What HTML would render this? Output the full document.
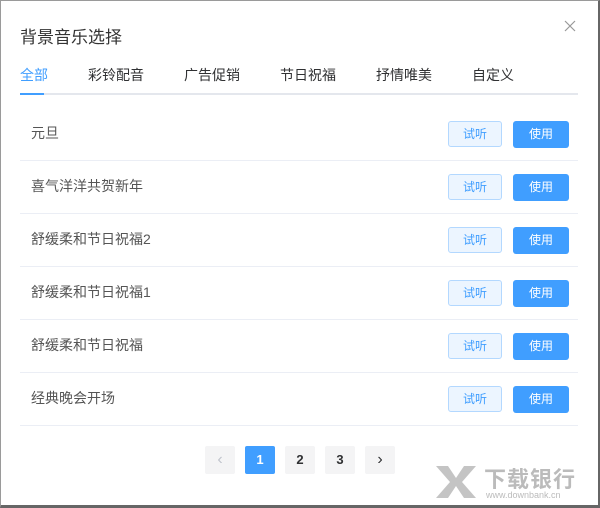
<!DOCTYPE html>
<html><head><meta charset="utf-8"><style>
body{margin:0;width:600px;height:508px;background:#fff;font-family:"Liberation Sans","Noto Sans CJK SC",sans-serif;position:relative;overflow:hidden}
.frame{position:absolute;left:0;top:0;border:1px solid #9a9a9a;border-right:2px solid #666;border-bottom:3px solid #666;box-sizing:border-box;width:600px;height:508px}
.title{position:absolute;left:20px;top:23px;font-size:17px;color:#333}
.close{position:absolute;left:564px;top:20px}
.tabs{position:absolute;left:20px;top:65px;width:558px;height:28px;border-bottom:2px solid #e4e7ed}
.tab{position:absolute;top:0;font-size:14px;color:#303133}
.ul{position:absolute;left:0;bottom:-2px;width:24px;height:2px;background:#409eff}
.row{position:absolute;left:20px;width:558px;height:53px;border-bottom:1px solid #ebeef5}
.name{position:absolute;left:11px;top:16px;font-size:14px;color:#555}
.b1{position:absolute;left:428px;top:14px;width:54px;height:26px;box-sizing:border-box;border:1px solid #b3d8ff;background:#ecf5ff;color:#409eff;font-size:12px;text-align:center;line-height:24px;border-radius:3px}
.b2{position:absolute;left:493px;top:14px;width:56px;height:27px;background:#409eff;color:#fff;font-size:12px;text-align:center;line-height:27px;border-radius:3px}
.pg{position:absolute;top:446px;width:30px;height:28px;background:#f4f4f5;color:#303133;font-size:13px;font-weight:bold;text-align:center;line-height:28px;border-radius:2px}
</style></head><body>
<div class="frame"></div>
<div class="title">背景音乐选择</div>
<svg class="close" width="12" height="12" viewBox="0 0 12 12"><path d="M1 1L11 11M11 1L1 11" stroke="#999" stroke-width="1.2"/></svg>
<div class="tabs">
<span class="tab" style="left:0;color:#409eff">全部</span>
<span class="tab" style="left:68px">彩铃配音</span>
<span class="tab" style="left:164px">广告促销</span>
<span class="tab" style="left:260px">节日祝福</span>
<span class="tab" style="left:356px">抒情唯美</span>
<span class="tab" style="left:452px">自定义</span>
<div class="ul"></div>
</div>
<div class="row" style="top:107px"><span class="name">元旦</span><div class="b1">试听</div><div class="b2">使用</div></div>
<div class="row" style="top:160px"><span class="name">喜气洋洋共贺新年</span><div class="b1">试听</div><div class="b2">使用</div></div>
<div class="row" style="top:213px"><span class="name">舒缓柔和节日祝福2</span><div class="b1">试听</div><div class="b2">使用</div></div>
<div class="row" style="top:266px"><span class="name">舒缓柔和节日祝福1</span><div class="b1">试听</div><div class="b2">使用</div></div>
<div class="row" style="top:319px"><span class="name">舒缓柔和节日祝福</span><div class="b1">试听</div><div class="b2">使用</div></div>
<div class="row" style="top:372px"><span class="name">经典晚会开场</span><div class="b1">试听</div><div class="b2">使用</div></div>
<div class="pg" style="left:205px;color:#c0c4cc;font-weight:normal;font-size:16px">‹</div>
<div class="pg" style="left:245px;background:#409eff;color:#fff">1</div>
<div class="pg" style="left:285px">2</div>
<div class="pg" style="left:325px">3</div>
<div class="pg" style="left:365px;font-weight:normal;font-size:16px">›</div>
<svg style="position:absolute;left:434px;top:464px" width="44" height="36" viewBox="0 0 44 36"><path d="M2 2H14L22 14L30 2H42L28 18L42 34H30L22 22L14 34H2L16 18Z" fill="#c4c4c4"/></svg>
<div style="position:absolute;left:484px;top:462px;font-size:22px;color:#bbb;font-weight:bold;letter-spacing:1px">下载银行</div>
<div style="position:absolute;left:486px;top:490px;font-size:9px;color:#bbb">www.downbank.cn</div>
</body></html>
